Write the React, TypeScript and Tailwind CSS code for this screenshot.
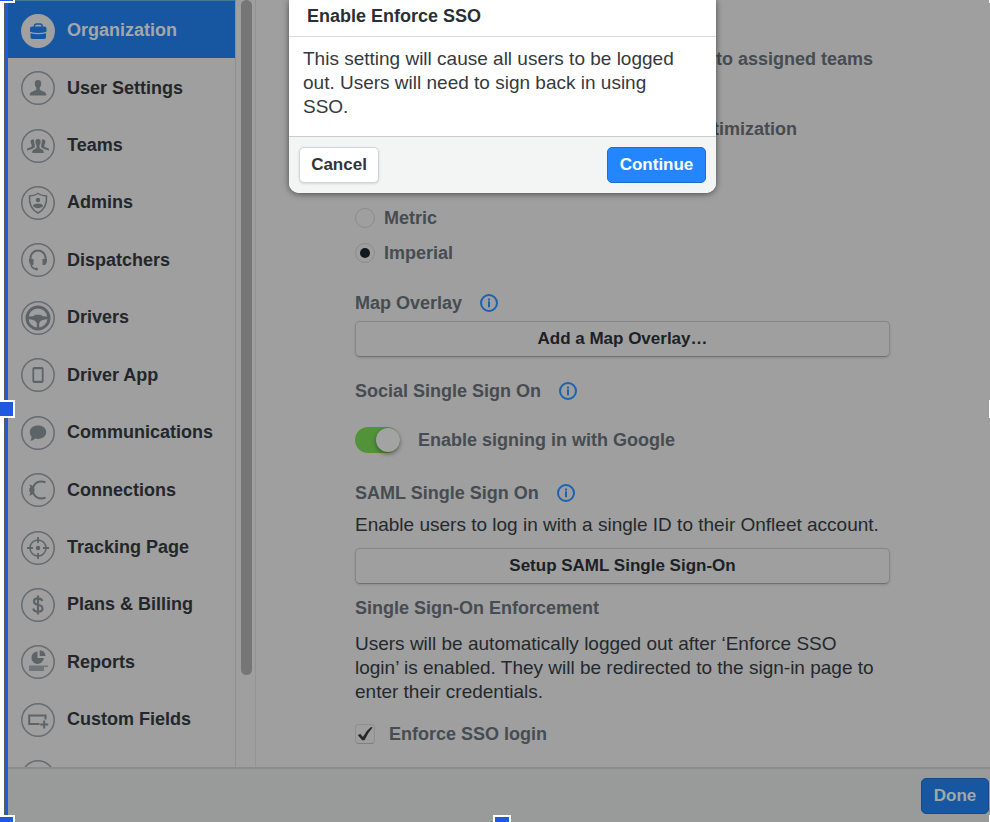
import type { ReactNode } from "react";

const items: { name: string; icon: ReactNode }[] = [
  {
    name: "Organization",
    icon: (
      <g fill="#1757a1" stroke="none">
        <path d="M9 14.500q0-2 2-2h12.500q2 0 2 2v3.200q-8.200 2.400-16.500 0z" />
        <path d="M9.500 19.200q7.700 2 15.500 0v4q0 1.800-1.800 1.800H11.300q-1.800 0-1.800-1.800z" />
        <path d="M13.500 13v-1q0-2 2-2h3.600q2 0 2 2v1" fill="none" stroke="#1757a1" strokeWidth="1.400" />
      </g>
    ),
  },
  {
    name: "User Settings",
    icon: (
      <path
        stroke="none"
        d="M17 9c2.400 0 3.400 1.600 3.200 3.800-.1 1.700-.6 2.900-1.400 3.800v2.200c1 1.100 5 1.600 6 3.200.4.800.5 1.500.5 2.500H8.700c0-1 .1-1.700.5-2.500 1-1.600 5-2.100 6-3.200v-2.200c-.8-.9-1.300-2.100-1.400-3.800C13.600 10.600 14.600 9 17 9z"
      />
    ),
  },
  {
    name: "Teams",
    icon: (
      <g stroke="none">
        <path d="M17 10c1.900 0 2.800 1.300 2.600 3-.1 1.400-.5 2.300-1.100 3v3c.8 1 3.600 1.500 4.100 3.100l.2 1.900H11.200l.2-1.900c.5-1.600 3.300-2.100 4.100-3.100v-3c-.6-.7-1-1.600-1.100-3-.2-1.700.7-3 2.600-3z" />
        <path d="M11.800 10.500c-1.700 0-2.400 1-2.200 2.400.1 1.200.4 2 1 2.500v2.400c-.8.900-3.900 1.200-4.600 2.300v1.300l4.500-1.100 3.300-1.800v-3.300c-.7-1-.9-3.100-.6-4.400q-.6-.6-1.400-.6z" />
        <path d="M22.200 10.500c1.700 0 2.400 1 2.200 2.400-.1 1.200-.4 2-1 2.500v2.400c.8.900 3.900 1.200 4.600 2.300v1.300l-4.500-1.100-3.300-1.800v-3.300c.7-1 .9-3.100.6-4.400q.6-.6 1.400-.6z" />
      </g>
    ),
  },
  {
    name: "Admins",
    icon: (
      <>
        <path d="M17 7.500c2.300 1.600 5 2.300 8.500 2.400.6 8-1.300 13.500-8.500 17.100-7.200-3.600-9.100-9.100-8.500-17.100 3.500-.1 6.200-.8 8.500-2.400z" fill="none" />
        <circle cx="17" cy="14" r="2.200" stroke="none" />
        <path d="M12 20.500q0-2.800 3.200-2.800h3.600q3.200 0 3.200 2.800-5 3.500-10 0z" stroke="none" />
      </>
    ),
  },
  {
    name: "Dispatchers",
    icon: (
      <>
        <path d="M9.500 17v-2a7.500 7.500 0 0 1 15 0v2" fill="none" strokeWidth="2" />
        <path d="M8 16h4.500v6H9.800Q8 20.500 8 18zM26 16h-4.500v6h2.700q1.800-1.500 1.800-4z" stroke="none" />
        <path d="M10 22q1 3.200 4.500 4" fill="none" />
        <circle cx="15.500" cy="26" r="1.500" stroke="none" />
      </>
    ),
  },
  {
    name: "Drivers",
    icon: (
      <>
        <circle cx="17" cy="17" r="11" fill="none" strokeWidth="3" />
        <path d="M6.500 15.500q5 .5 8.200-1.800h4.600q3.200 2.300 8.200 1.800v2.400q-8.100.3-9.300 4.300v5.300h-2.400v-5.300q-1.200-4-9.300-4.300z" stroke="none" />
      </>
    ),
  },
  {
    name: "Driver App",
    icon: (
      <path fillRule="evenodd" stroke="none" d="M13.200 9h7.600q1.800 0 1.800 1.800v12.400q0 1.800-1.800 1.800h-7.600q-1.800 0-1.800-1.800V10.800q0-1.800 1.800-1.800zM13.200 11.200v11.600h7.600V11.200z" />
    ),
  },
  {
    name: "Communications",
    icon: (
      <path stroke="none" d="M17 9.500c4.800 0 8.200 2.700 8.200 6.600 0 4-3.400 6.800-8.200 6.800q-1.500 0-2.800-.3-2.300 2.200-5 2.200 1.500-1.800 1.300-4-1.700-1.900-1.700-4.700c0-3.900 3.400-6.600 8.200-6.600z" />
    ),
  },
  {
    name: "Connections",
    icon: (
      <>
        <path d="M24.500 9.200q-8-2.300-11.500 3.300-1.200 2-1.200 4.500t1.200 4.500q3.500 5.600 11.500 3.300" fill="none" strokeWidth="2" />
        <path d="M8 11.500q4 .5 5 3l.7 2.500-.7 2.500q-1 2.500-5 3 1.500-1.500 1.300-3l-1-1v-3l1-1q.2-1.500-1.300-3z" stroke="none" />
      </>
    ),
  },
  {
    name: "Tracking Page",
    icon: (
      <>
        <circle cx="17" cy="17" r="8" fill="none" />
        <circle cx="17" cy="17" r="2.200" stroke="none" />
        <path d="M17 6v6M17 22v6M6 17h6M22 17h6" strokeWidth="1.800" />
      </>
    ),
  },
  {
    name: "Plans & Billing",
    icon: (
      <path d="M21.300 13q-.7-2.700-4.300-2.700-4 0-4 3.100 0 2.500 4 3.400 4.500 1 4.500 3.700 0 3.200-4.500 3.200-4.200 0-4.700-3.200M17 7.500v19" fill="none" strokeWidth="2.200" />
    ),
  },
  {
    name: "Reports",
    icon: (
      <g stroke="none">
        <path d="M16.500 6.500V13h6.300a6.200 6.200 0 1 1-6.300-6.500z" />
        <path d="M18.700 5.300q5.300.3 5.800 5.700h-5.800z" />
        <path d="M8 20.500h19v1.600H8zM8 22.100h15v4H8z" opacity=".7" />
      </g>
    ),
  },
  {
    name: "Custom Fields",
    icon: (
      <path d="M18.500 21H8.200v-8.500h16.300v4M23.200 17.500v8M19.200 21.500h8" fill="none" strokeWidth="2" />
    ),
  },
  { name: "", icon: null },
];

const InfoButton = ({ label }: { label: string }) => (
  <button type="button" aria-label={label}>
    <svg className="block size-[18px]" viewBox="0 0 18 18" fill="none" stroke="#1c62ae" strokeWidth="2">
      <circle cx="9" cy="9" r="8" />
      <path d="M9 4.500v2M9 7.300v6" />
    </svg>
  </button>
);

const Sidebar = () => (
  <nav className="w-[228px] shrink-0 overflow-hidden border-r border-t border-r-[#8f8f8f] border-t-[#4a7696]">
    <ul className="grid h-[804px] auto-rows-fr">
      {items.map((item, i) => (
        <li key={i} className={i === 0 ? "bg-[#1757a1] text-[#a3a7ab]" : "text-[#23272b]"}>
          <a href="#" className="flex h-full items-center gap-3 pl-[13px] pt-0.5 text-[18px] font-bold">
            <svg
              className="size-[34px] shrink-0"
              viewBox="0 0 34 34"
              fill="#5d6468"
              stroke="#5d6468"
              strokeWidth="1.500"
            >
              <circle
                cx="17"
                cy="17"
                r="16.200"
                fill={i === 0 ? "#a1a1a1" : "none"}
                stroke={i === 0 ? "#a1a1a1" : "#666c71"}
              />
              {item.icon}
            </svg>
            {item.name}
          </a>
        </li>
      ))}
    </ul>
  </nav>
);

const Settings = () => (
  <main className="min-w-0 flex-1 overflow-hidden pl-[99px] pr-[100px] pt-[47px] text-[19px] leading-6 text-[#24292d]">
    <p className="ml-[361px] whitespace-nowrap text-[18px] font-bold text-[#464c52]">to assigned teams</p>
    <p className="ml-[336px] mt-[46px] text-[18px] font-bold text-[#464c52]">optimization</p>
    <div className="mt-[65px] grid gap-[11px] text-[18px] font-bold text-[#464c52]">
      <label className="flex items-center gap-[9px]">
        <input
          type="radio"
          name="units"
          className="grid size-5 appearance-none place-items-center rounded-full border border-[#8c8c8c]"
        />
        Metric
      </label>
      <label className="flex items-center gap-[9px]">
        <input
          type="radio"
          name="units"
          defaultChecked
          className="grid size-5 appearance-none place-items-center rounded-full border border-[#8c8c8c] before:size-[10px] before:rounded-full before:bg-[#14191d]"
        />
        Imperial
      </label>
    </div>

    <div className="mt-[26px] flex items-center gap-[18px]">
      <h2 className="text-[18px] font-bold text-[#464c52]">Map Overlay</h2>
      <InfoButton label="About map overlay" />
    </div>
    <button
      type="button"
      className="mt-1.5 h-9 w-full rounded-[5px] border border-[#858688] border-b-[#707173] text-[17px] font-bold text-[#1c2125] shadow-sm"
    >
      Add a Map Overlay…
    </button>

    <div className="mt-[22px] flex items-center gap-[18px]">
      <h2 className="text-[18px] font-bold text-[#464c52]">Social Single Sign On</h2>
      <InfoButton label="About social single sign on" />
    </div>
    <label className="mt-6 flex items-center gap-[18px] text-[18px] font-bold text-[#464c52]">
      <input
        type="checkbox"
        role="switch"
        defaultChecked
        className="flex h-[26px] w-[45px] appearance-none items-center justify-end rounded-full bg-[#52933a] before:size-6 before:rounded-full before:bg-[#a3a3a3] before:shadow-[0_2px_4px_#00000066]"
      />
      Enable signing in with Google
    </label>

    <div className="mt-7 flex items-center gap-[18px]">
      <h2 className="text-[18px] font-bold text-[#464c52]">SAML Single Sign On</h2>
      <InfoButton label="About SAML single sign on" />
    </div>
    <p className="mt-2 whitespace-nowrap">Enable users to log in with a single ID to their Onfleet account.</p>
    <button
      type="button"
      className="mt-[11px] h-9 w-full rounded-[5px] border border-[#858688] border-b-[#707173] text-[17px] font-bold text-[#1c2125] shadow-sm"
    >
      Setup SAML Single Sign-On
    </button>

    <h2 className="mt-3 text-[18px] font-bold text-[#464c52]">Single Sign-On Enforcement</h2>
    <p className="mt-3">
      Users will be automatically logged out after ‘Enforce SSO
      <br />
      login’ is enabled. They will be redirected to the sign-in page to
      <br />
      enter their credentials.
    </p>
    <label className="mt-[18px] flex items-center gap-3.5 text-[18px] font-bold text-[#464c52]">
      <span className="grid size-5 place-items-center">
        <input
          type="checkbox"
          defaultChecked
          className="col-start-1 row-start-1 size-5 appearance-none rounded-[4px] border border-[#8f8f8f] border-b-[#808080]"
        />
        <svg className="pointer-events-none col-start-1 row-start-1 size-4" viewBox="0 0 16 16" fill="#23292d">
          <path d="M.8 9.200l2.400-1.400 2.700 3.300Q8.800 4.800 14 1l1.600.4Q10.800 6.600 7.500 14.200H5.200z" />
        </svg>
      </span>
      Enforce SSO login
    </label>
  </main>
);

const Dialog = () => (
  <div className="absolute inset-x-0 top-0 flex justify-center pl-[7px]">
    <section
      role="dialog"
      aria-labelledby="dialog-title"
      className="w-[427px] overflow-hidden rounded-b-[10px] bg-white text-[#353a40] shadow-[0_1px_6px_#00000088]"
    >
      <h1 id="dialog-title" className="border-b border-[#d9dbdc] px-[18px] pb-2 pt-1 text-[18px] font-bold leading-6 text-[#2a2f36]">
        Enable Enforce SSO
      </h1>
      <p className="px-3.5 pb-[17px] pt-2.5 text-[19px] leading-6">
        This setting will cause all users to be logged
        <br />
        out. Users will need to sign back in using
        <br />
        SSO.
      </p>
      <div className="flex justify-between border-t border-[#c9cccf] bg-[#f3f5f5] p-2.5">
        <button
          type="button"
          className="h-9 w-20 rounded-[5px] border border-[#d0d3d7] bg-white text-[17px] font-bold text-[#30353b] shadow-sm"
        >
          Cancel
        </button>
        <button
          type="button"
          className="h-9 w-[99px] rounded-[5px] border border-[#1b70cf] bg-[#2486ff] text-[17px] font-bold text-white"
        >
          Continue
        </button>
      </div>
    </section>
  </div>
);

const Handle = ({ className }: { className: string }) => (
  <span className={`absolute size-[18px] border-2 border-white bg-[#2059df] ${className}`} />
);

const App = () => {
  return (
    <div className="relative flex h-screen overflow-hidden bg-white font-['Liberation_Sans',Arial,sans-serif]">
      <div className="ml-1 w-1 shrink-0 border-l-2 border-[#55585c] bg-[#2059df]" />
      <div className="relative flex min-w-0 flex-1 flex-col bg-[#9f9f9f]">
        <div className="flex min-h-0 flex-1">
          <Sidebar />
          <div className="w-5 shrink-0 border-r border-[#949494] pl-[5px]">
            <div className="h-[88%] w-[11px] rounded-full bg-[#767676]" />
          </div>
          <Settings />
        </div>
        <footer className="flex justify-end border-t-2 border-[#8b8d8c] bg-[#999b9a] pb-2 pr-px pt-[9px]">
          <button
            type="button"
            className="h-9 w-[68px] rounded-[5px] border border-[#174c88] bg-[#1757a1] text-[17px] font-bold text-[#a3a7ab]"
          >
            Done
          </button>
        </footer>
        <Dialog />
      </div>
      <Handle className="-left-[3px] -top-[15px]" />
      <Handle className="left-[493px] -top-[16px]" />
      <Handle className="-left-[3px] top-[400px]" />
      <Handle className="-bottom-[11px] -left-[3px]" />
      <Handle className="-bottom-[11px] left-[493px]" />
      <Handle className="-right-[17px] -top-[15px]" />
      <Handle className="-right-[17px] top-[400px]" />
      <Handle className="-bottom-[11px] -right-[17px]" />
    </div>
  );
};

export default App;
